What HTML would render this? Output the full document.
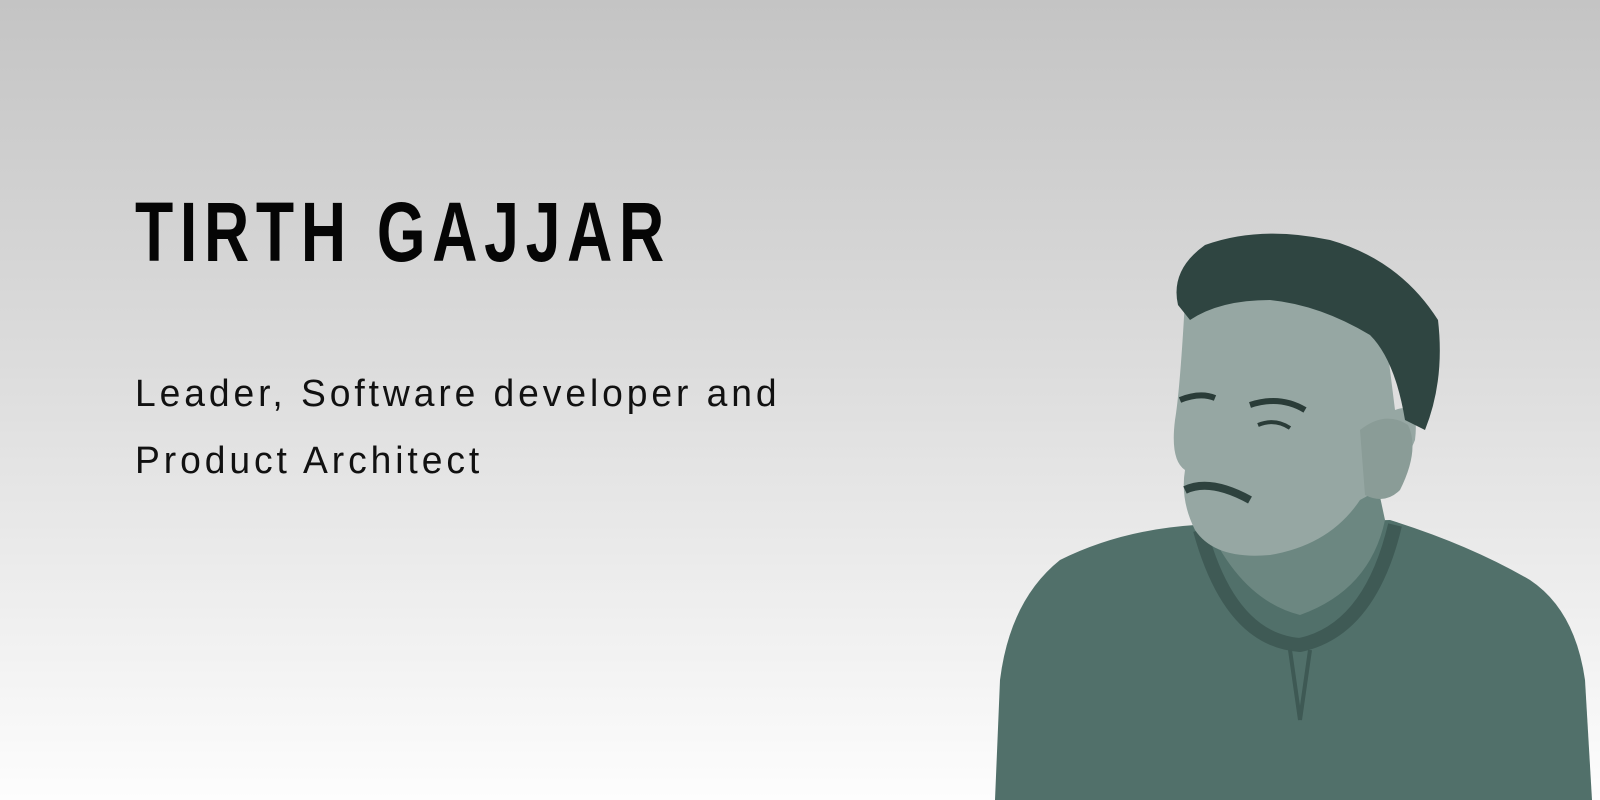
<!DOCTYPE html>
<html><head><meta charset="utf-8"><style>
html,body{margin:0;padding:0}
body{width:1600px;height:800px;overflow:hidden;position:relative;background:linear-gradient(180deg,#c4c4c4 0%,#dcdcdc 45%,#fdfdfd 100%);font-family:"Liberation Sans",sans-serif}
h1{position:absolute;left:135px;top:184px;margin:0;font-size:84px;font-weight:bold;letter-spacing:9px;color:#050505;transform:scaleX(0.745);transform-origin:left top;white-space:nowrap}
.sub{position:absolute;left:135px;top:361px;margin:0;font-size:38px;line-height:67px;letter-spacing:4px;color:#111;transform:scaleX(0.98);transform-origin:left top;white-space:nowrap}
svg{position:absolute;left:0;top:0}
</style></head><body>
<h1>TIRTH GAJJAR</h1>
<div class="sub">Leader, Software developer and<br>Product Architect</div>
<svg width="1600" height="800" viewBox="0 0 1600 800">
<path d="M995 800 L1000 680 Q1010 600 1060 560 Q1120 530 1195 525 L1390 520 Q1470 545 1530 580 Q1575 610 1585 680 L1592 800 Z" fill="#51706a"/>
<path d="M1200 530 Q1230 640 1300 645 Q1370 630 1395 525" fill="none" stroke="#3f5a55" stroke-width="14"/>
<path d="M1290 650 L1300 720 M1310 650 L1300 720" stroke="#3e5954" stroke-width="4"/>
<path d="M1205 520 Q1240 600 1300 615 Q1370 590 1385 520 L1370 450 L1220 470 Z" fill="#6c8781"/>
<path d="M1185 300 Q1180 390 1175 420 Q1170 460 1185 470 Q1180 500 1195 530 Q1215 560 1270 555 Q1330 545 1360 500 Q1400 480 1415 440 Q1420 400 1395 410 L1385 330 Q1350 290 1280 285 Z" fill="#96a7a3"/>
<path d="M1360 430 Q1385 410 1408 425 Q1420 450 1400 490 Q1385 505 1365 495 Z" fill="#8a9c97"/>
<path d="M1178 305 Q1170 270 1205 245 Q1260 225 1330 240 Q1400 260 1438 320 Q1445 380 1425 430 L1405 420 Q1395 360 1370 335 Q1320 305 1270 300 Q1220 300 1190 320 Z" fill="#2f4541"/>
<path d="M1180 400 Q1200 392 1215 398 M1250 405 Q1280 395 1305 410" stroke="#2a3c38" stroke-width="6" fill="none"/>
<path d="M1258 425 Q1275 418 1290 428" stroke="#2a3c38" stroke-width="4" fill="none"/>
<path d="M1185 490 Q1210 478 1250 500" stroke="#2e423e" stroke-width="8" fill="none"/>
</svg>
</body></html>
